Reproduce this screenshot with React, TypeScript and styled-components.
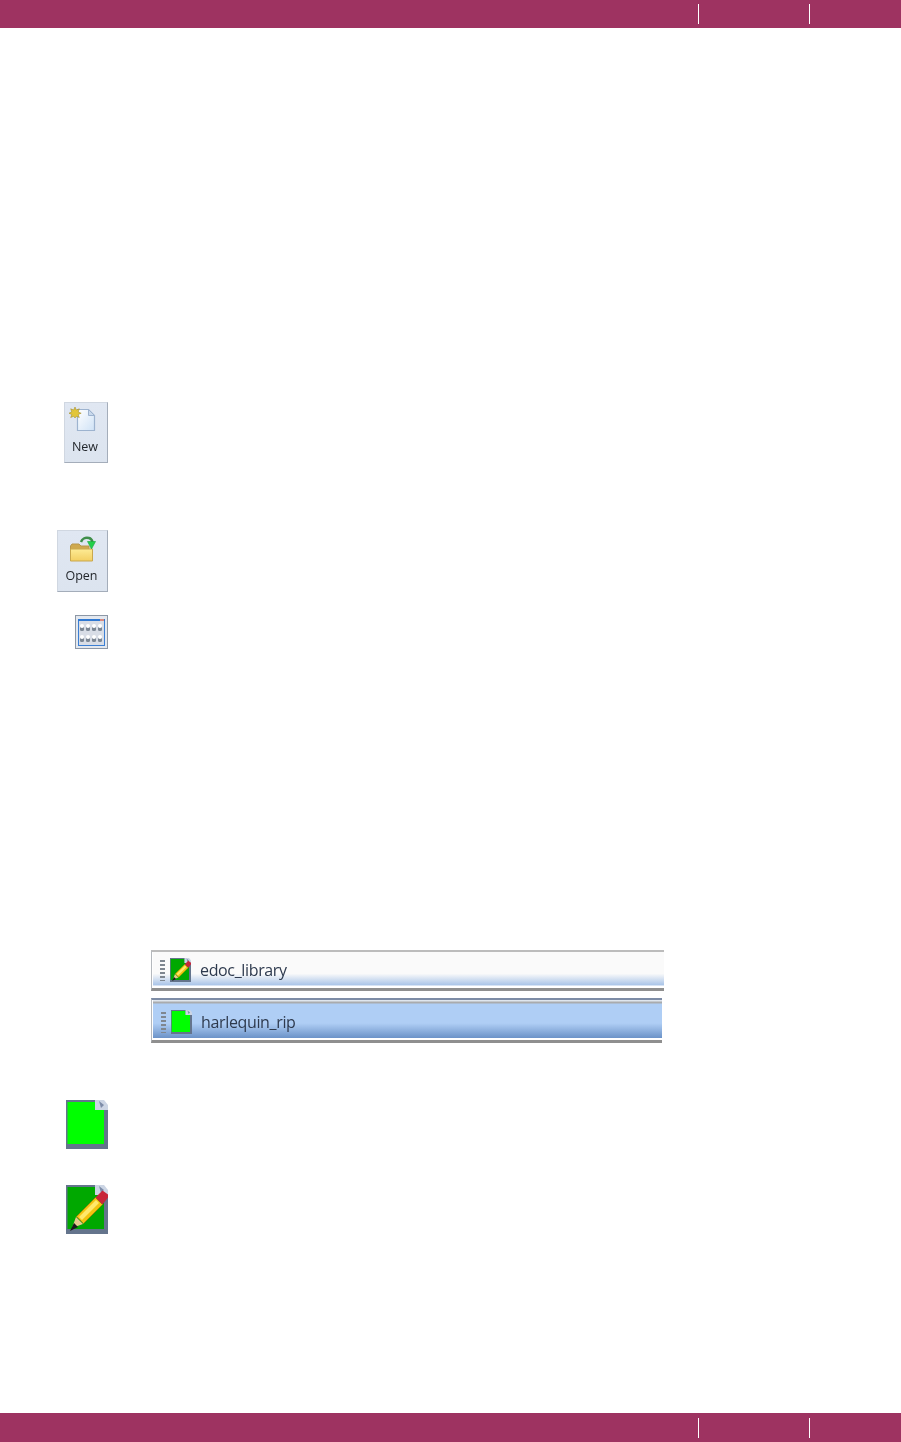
import styled, { createGlobalStyle } from 'styled-components'

const GlobalStyle = createGlobalStyle`
  html, body {
    margin: 0;
    padding: 0;
    background: #fff;
    font-family: 'Open Sans', 'Liberation Sans', sans-serif;
  }
`

const Page = styled.div`
  height: 1442px;
  display: flex;
  flex-direction: column;
  overflow: hidden;
`

const Bar = styled.div<{ $height: number }>`
  height: ${({ $height }) => $height}px;
  flex: none;
  background: #9e3361;
  display: flex;
  align-items: center;
  justify-content: flex-end;
`

const BarCell = styled.div<{ $width: number }>`
  width: ${({ $width }) => $width}px;
  height: 20px;
  border-left: 1px solid #fff;
  box-sizing: border-box;
`

const Main = styled.main`
  flex: 1;
  padding-top: 374px;
  display: flex;
  flex-direction: column;
`

const IconRow = styled.div<{ $top: number }>`
  width: 108px;
  margin-top: ${({ $top }) => $top}px;
  display: flex;
  justify-content: flex-end;
`

const ToolButton = styled.div<{ $width: number; $height: number }>`
  width: ${({ $width }) => $width}px;
  height: ${({ $height }) => $height}px;
  box-sizing: border-box;
  padding-right: 2px;
  background: linear-gradient(#e0e7f2, #dce4ef);
  border: 1px solid #d0d7e1;
  border-right-color: #a4adba;
  border-bottom-color: #a4adba;
  display: flex;
  flex-direction: column;
  align-items: center;
  filter: blur(0.45px);
`

const ToolIcon = styled.svg`
  display: block;
  flex: none;
  margin-top: 4px;
`

const ToolLabel = styled.span<{ $top: number }>`
  font-size: 12.5px;
  line-height: 16px;
  color: #23272c;
  margin-top: ${({ $top }) => $top}px;
`

const ViewToggle = styled.div`
  width: 33px;
  height: 34px;
  box-sizing: border-box;
  border: 1px solid #8c97a6;
  background: #e3e8ef;
  filter: blur(0.5px);
`

const GridSvg = styled.svg`
  display: block;
`

const Tab = styled.div<{ $active?: boolean; $top: number; $width: number; $height: number }>`
  margin-top: ${({ $top }) => $top}px;
  margin-left: 151px;
  width: ${({ $width }) => $width}px;
  height: ${({ $height }) => $height}px;
  box-sizing: border-box;
  display: flex;
  align-items: center;
  padding-left: ${({ $active }) => ($active ? 9 : 8)}px;
  padding-top: ${({ $active }) => ($active ? 4 : 0)}px;
  border-left: 1px solid #b4b8bd;
  border-top: 2px solid ${({ $active }) => ($active ? '#7d8ca6' : '#bcbcbc')};
  border-bottom: 3px solid #8f8f8f;
  box-shadow: inset 1px 0 0 #fff;
  background: ${({ $active }) =>
    $active
      ? 'linear-gradient(#dfe6ee 0, #dfe6ee 1px, #a9abad 2px, #a9abad 3px, #afcef5 4px, #afcef5 58%, #6d94c9 94%, #fff 96%, #fff 100%)'
      : 'linear-gradient(#fafafa 0, #fafafa 60%, #a9c4e8 92%, #fff 94%, #fff 100%)'};
  filter: blur(0.35px);
`

const Grip = styled.div`
  width: 5px;
  height: 21px;
  flex: none;
  margin-right: 5px;
  background: repeating-linear-gradient(#7f8790 0, #7f8790 2px, transparent 2px, transparent 4px);
`

const TabName = styled.span`
  font-size: 16px;
  line-height: 22px;
  letter-spacing: -0.35px;
  color: #2e3a4e;
  margin-left: 9px;
`

const NoteSvg = styled.svg<{ $blur: number }>`
  display: block;
  flex: none;
  filter: blur(${({ $blur }) => $blur}px);
`

function NewDocIcon() {
  return (
    <ToolIcon width="32" height="28" viewBox="0 0 32 28">
      <defs>
        <linearGradient id="docFill" x1="0" y1="0" x2="1" y2="1">
          <stop offset="0" stopColor="#ffffff" />
          <stop offset="1" stopColor="#cfe2f6" />
        </linearGradient>
      </defs>
      <path d="M8.500 2.500h11l6 6v15h-17z" fill="url(#docFill)" stroke="#9db3cf" strokeWidth="1.200" />
      <path d="M19.500 2.500v6h6z" fill="#c9d9ec" stroke="#9db3cf" />
      <path
        d="M6 0l1.300 3 3-1.200L9.200 5l3 1.200-3 1.300 1.100 3-3-1.200L6 11 4.700 9.300l-3 1.200 1.100-3-3-1.300 3-1.200-1.100-3.200 3 1.200z"
        fill="#e2c63a"
        stroke="#9a8424"
        strokeWidth=".5"
      />
    </ToolIcon>
  )
}

function OpenFolderIcon() {
  return (
    <ToolIcon width="31" height="30" viewBox="0 0 31 30">
      <defs>
        <linearGradient id="folderFill" x1="0" y1="0" x2="0" y2="1">
          <stop offset="0" stopColor="#fdeb95" />
          <stop offset="1" stopColor="#f3cf62" />
        </linearGradient>
      </defs>
      <path d="M4.500 25V11l1.500-2h7l2 2h8v14z" fill="#cfa94e" stroke="#b7974c" />
      <path d="M4.500 26V14h22v12z" fill="url(#folderFill)" stroke="#c9a84e" />
      <path d="M15 7c1-3 4-5 8-4 2 .5 3 2 3.500 4" fill="none" stroke="#3f8f4a" strokeWidth="2.500" />
      <path d="M21.500 6.500h8l-4 7.500z" fill="#22d04a" stroke="#18a53a" strokeWidth=".6" />
    </ToolIcon>
  )
}

function GridIcon() {
  const columns = [0, 1, 2, 3]
  return (
    <GridSvg width="31" height="32" viewBox="0 0 31 32">
      <rect x="2.500" y="3.500" width="26" height="26" fill="#d8dde6" stroke="#3b7fd4" />
      <rect x="2" y="3" width="27" height="2" fill="#2f78d2" />
      <rect x="24" y="3" width="4" height="2" fill="#d98a80" />
      {[9, 20].map(y =>
        columns.map(i => (
          <g key={`${y}-${i}`}>
            <rect x={4 + i * 6} y={y + 1} width="4" height="5" rx="1.500" fill="#7c8794" />
            <circle cx={6 + i * 6} cy={y + 1} r="2" fill="#fff" />
          </g>
        ))
      )}
    </GridSvg>
  )
}

function NoteIcon({ size, edit }: { size: number; edit?: boolean }) {
  const fill = edit ? '#00a800' : '#00ff00'
  return (
    <NoteSvg $blur={size > 30 ? 0.5 : 0.3} width={size} height={(size * 49) / 42} viewBox="0 0 42 49">
      <path d="M0 0h31l11 9v40H0z" fill="#64748c" />
      <path d="M1.500 2H29v8h9v34H1.500z" fill={fill} />
      <path d="M29 0h9l4 5v5H29z" fill="#ccd5e4" />
      <path d="M33 1l5 4-3 3z" fill="#7d8ca8" />
      {edit && (
        <g>
          <path d="M6 43l4-11 7 7z" fill="#e8c98c" />
          <path d="M4 46l4-8 4 4z" fill="#1a1a1a" />
          <path d="M10.500 31.500l19-19 7 7-19 19z" fill="#f2c40f" stroke="#9b7d10" strokeWidth=".8" />
          <path d="M13 32L30 15l3 3-17 17z" fill="#ffe96a" />
          <path d="M29.500 12.500l7-7 5.500 4v3l-5.500 7z" fill="#c8263a" />
        </g>
      )}
    </NoteSvg>
  )
}

export default function App() {
  return (
    <Page>
      <GlobalStyle />
      <Bar $height={28}>
        <BarCell $width={111} />
        <BarCell $width={92} />
      </Bar>

      <Main>
        <IconRow $top={0}>
          <ToolButton $width={44} $height={61}>
            <NewDocIcon />
            <ToolLabel $top={4}>New</ToolLabel>
          </ToolButton>
        </IconRow>

        <IconRow $top={67}>
          <ToolButton $width={51} $height={62}>
            <OpenFolderIcon />
            <ToolLabel $top={3}>Open</ToolLabel>
          </ToolButton>
        </IconRow>

        <IconRow $top={23}>
          <ViewToggle>
            <GridIcon />
          </ViewToggle>
        </IconRow>

        <Tab $top={301} $width={513} $height={41}>
          <Grip />
          <NoteIcon size={21} edit />
          <TabName>edoc_library</TabName>
        </Tab>

        <Tab $active $top={7} $width={511} $height={45}>
          <Grip />
          <NoteIcon size={21} />
          <TabName>harlequin_rip</TabName>
        </Tab>

        <IconRow $top={57}>
          <NoteIcon size={42} />
        </IconRow>

        <IconRow $top={36}>
          <NoteIcon size={42} edit />
        </IconRow>
      </Main>

      <Bar $height={29}>
        <BarCell $width={111} />
        <BarCell $width={92} />
      </Bar>
    </Page>
  )
}
